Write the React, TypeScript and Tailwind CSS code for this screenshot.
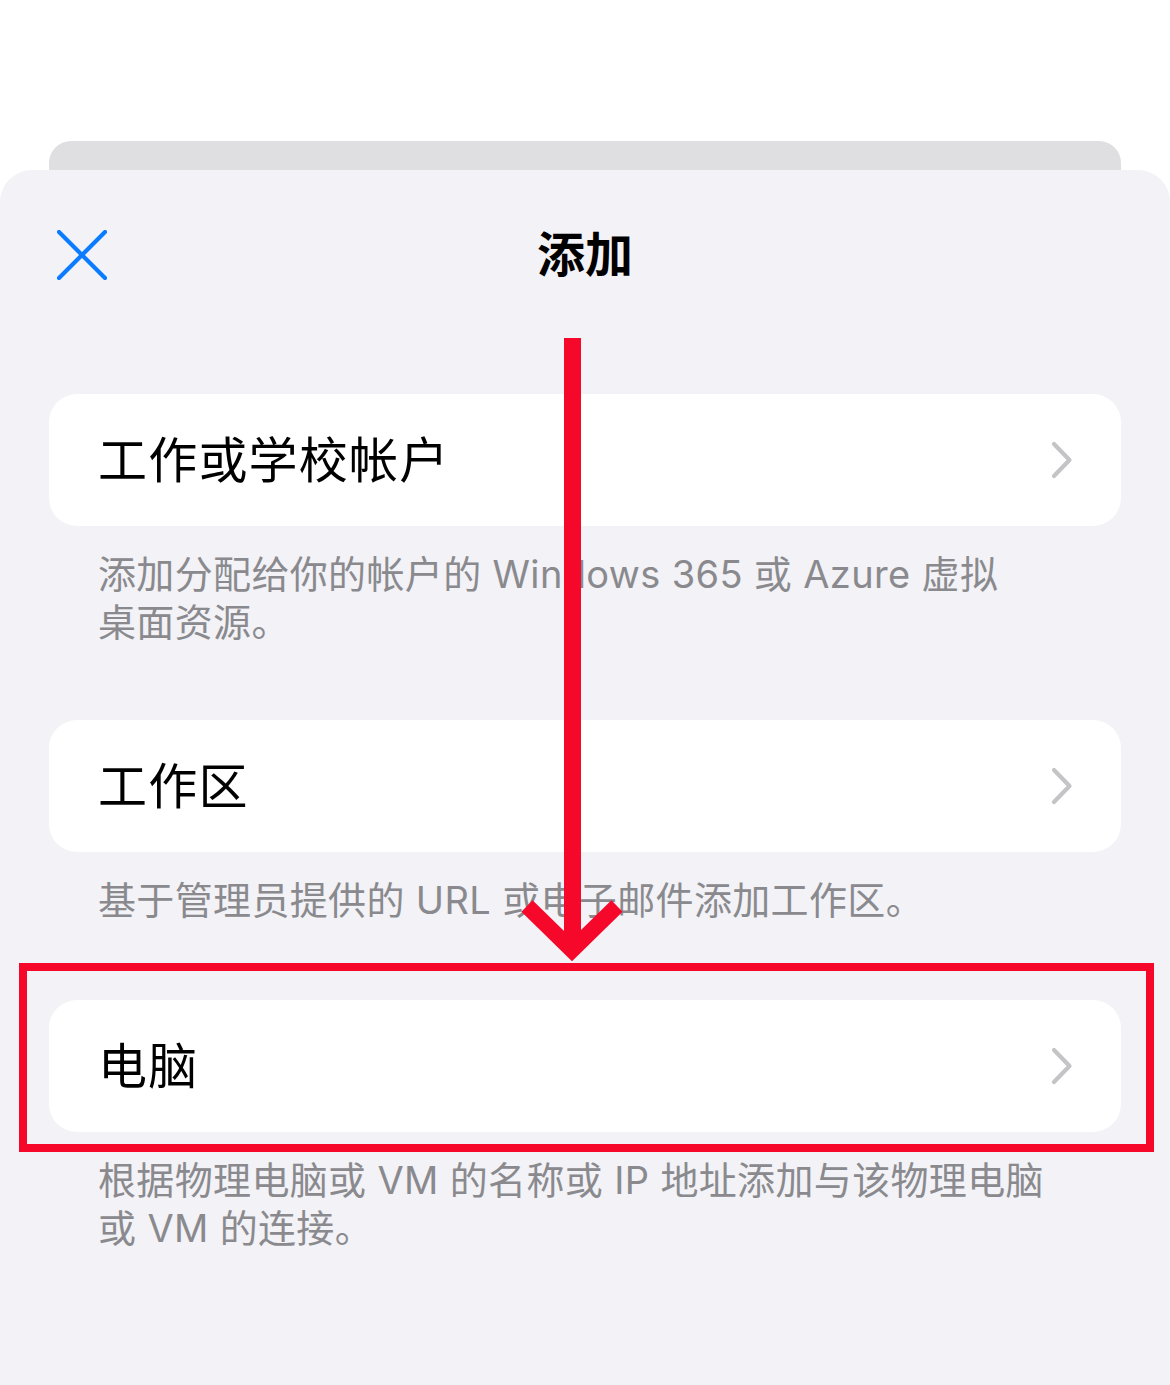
const rows = [
  {
    title: "工作或学校帐户",
    lines: ["添加分配给你的帐户的 Windows 365 或 Azure 虚拟", "桌面资源。"],
  },
  {
    title: "工作区",
    lines: ["基于管理员提供的 URL 或电子邮件添加工作区。"],
  },
  {
    title: "电脑",
    lines: ["根据物理电脑或 VM 的名称或 IP 地址添加与该物理电脑", "或 VM 的连接。"],
  },
];

const Chevron = () => (
  <svg viewBox="0 0 24 40" className="h-[40px] w-[24px] text-[#c4c4c7]">
    <path d="M4 4 L19.5 20 L4 36" stroke="currentColor" strokeWidth="4.2" strokeLinecap="round" strokeLinejoin="round" fill="none" />
  </svg>
);

const App = () => {
  return (
    <div className="relative flex h-[1385px] w-full flex-col overflow-hidden bg-white font-[Inter,'Noto_Sans_CJK_SC',sans-serif]">
      {/* sheet behind */}
      <div className="mx-[49px] mt-[141px] h-[29px] shrink-0 rounded-t-[22px] bg-[#dfdfe1]" />

      {/* Main sheet */}
      <div className="flex flex-1 flex-col rounded-t-[32px] bg-[#f2f2f7] px-[49px] pt-[60px]">
        <div className="relative flex h-[50px] items-center justify-center">
          <button className="absolute left-[8px] top-0 h-[50px] w-[50px] text-[#0b7bff]">
            <svg viewBox="0 0 50 50" className="h-[50px] w-[50px]">
              <path d="M2 2 L48 48 M48 2 L2 48" stroke="currentColor" strokeWidth="4.2" strokeLinecap="round" fill="none" />
            </svg>
          </button>
          <h1 className="text-[48px] font-bold leading-none text-black">添加</h1>
        </div>

        <div className="mt-[114px] flex flex-col">
          {rows.map((row, i) => (
            <div key={row.title} className={i === 0 ? "" : i === 1 ? "mt-[74px]" : "mt-[76px]"}>
              <div className="flex h-[132px] items-center justify-between rounded-[28px] bg-white pl-[49px] pr-[47px]">
                <span className="text-[49px] leading-none tracking-[1.2px] text-black">{row.title}</span>
                <Chevron />
              </div>
              <div className="mt-[24px] pl-[49px] text-[38px] leading-[48px] tracking-[0.35px] text-[#8a8a8e]">
                {row.lines.map((l) => (
                  <div key={l} className="whitespace-nowrap">{l}</div>
                ))}
              </div>
            </div>
          ))}
        </div>
      </div>

      {/* annotation: highlight box */}
      <div className="absolute left-[19px] top-[963px] h-[189px] w-[1135px] border-[8px] border-[#f5082a]" />

      {/* annotation: arrow */}
      <svg className="pointer-events-none absolute left-0 top-0" width="1170" height="1385" viewBox="0 0 1170 1385">
        <rect x="564" y="338" width="17" height="610" fill="#f5082a" />
        <polyline points="527,906 572,950 617,906" fill="none" stroke="#f5082a" strokeWidth="16" strokeLinejoin="miter" />
      </svg>
    </div>
  );
};

export default App;
